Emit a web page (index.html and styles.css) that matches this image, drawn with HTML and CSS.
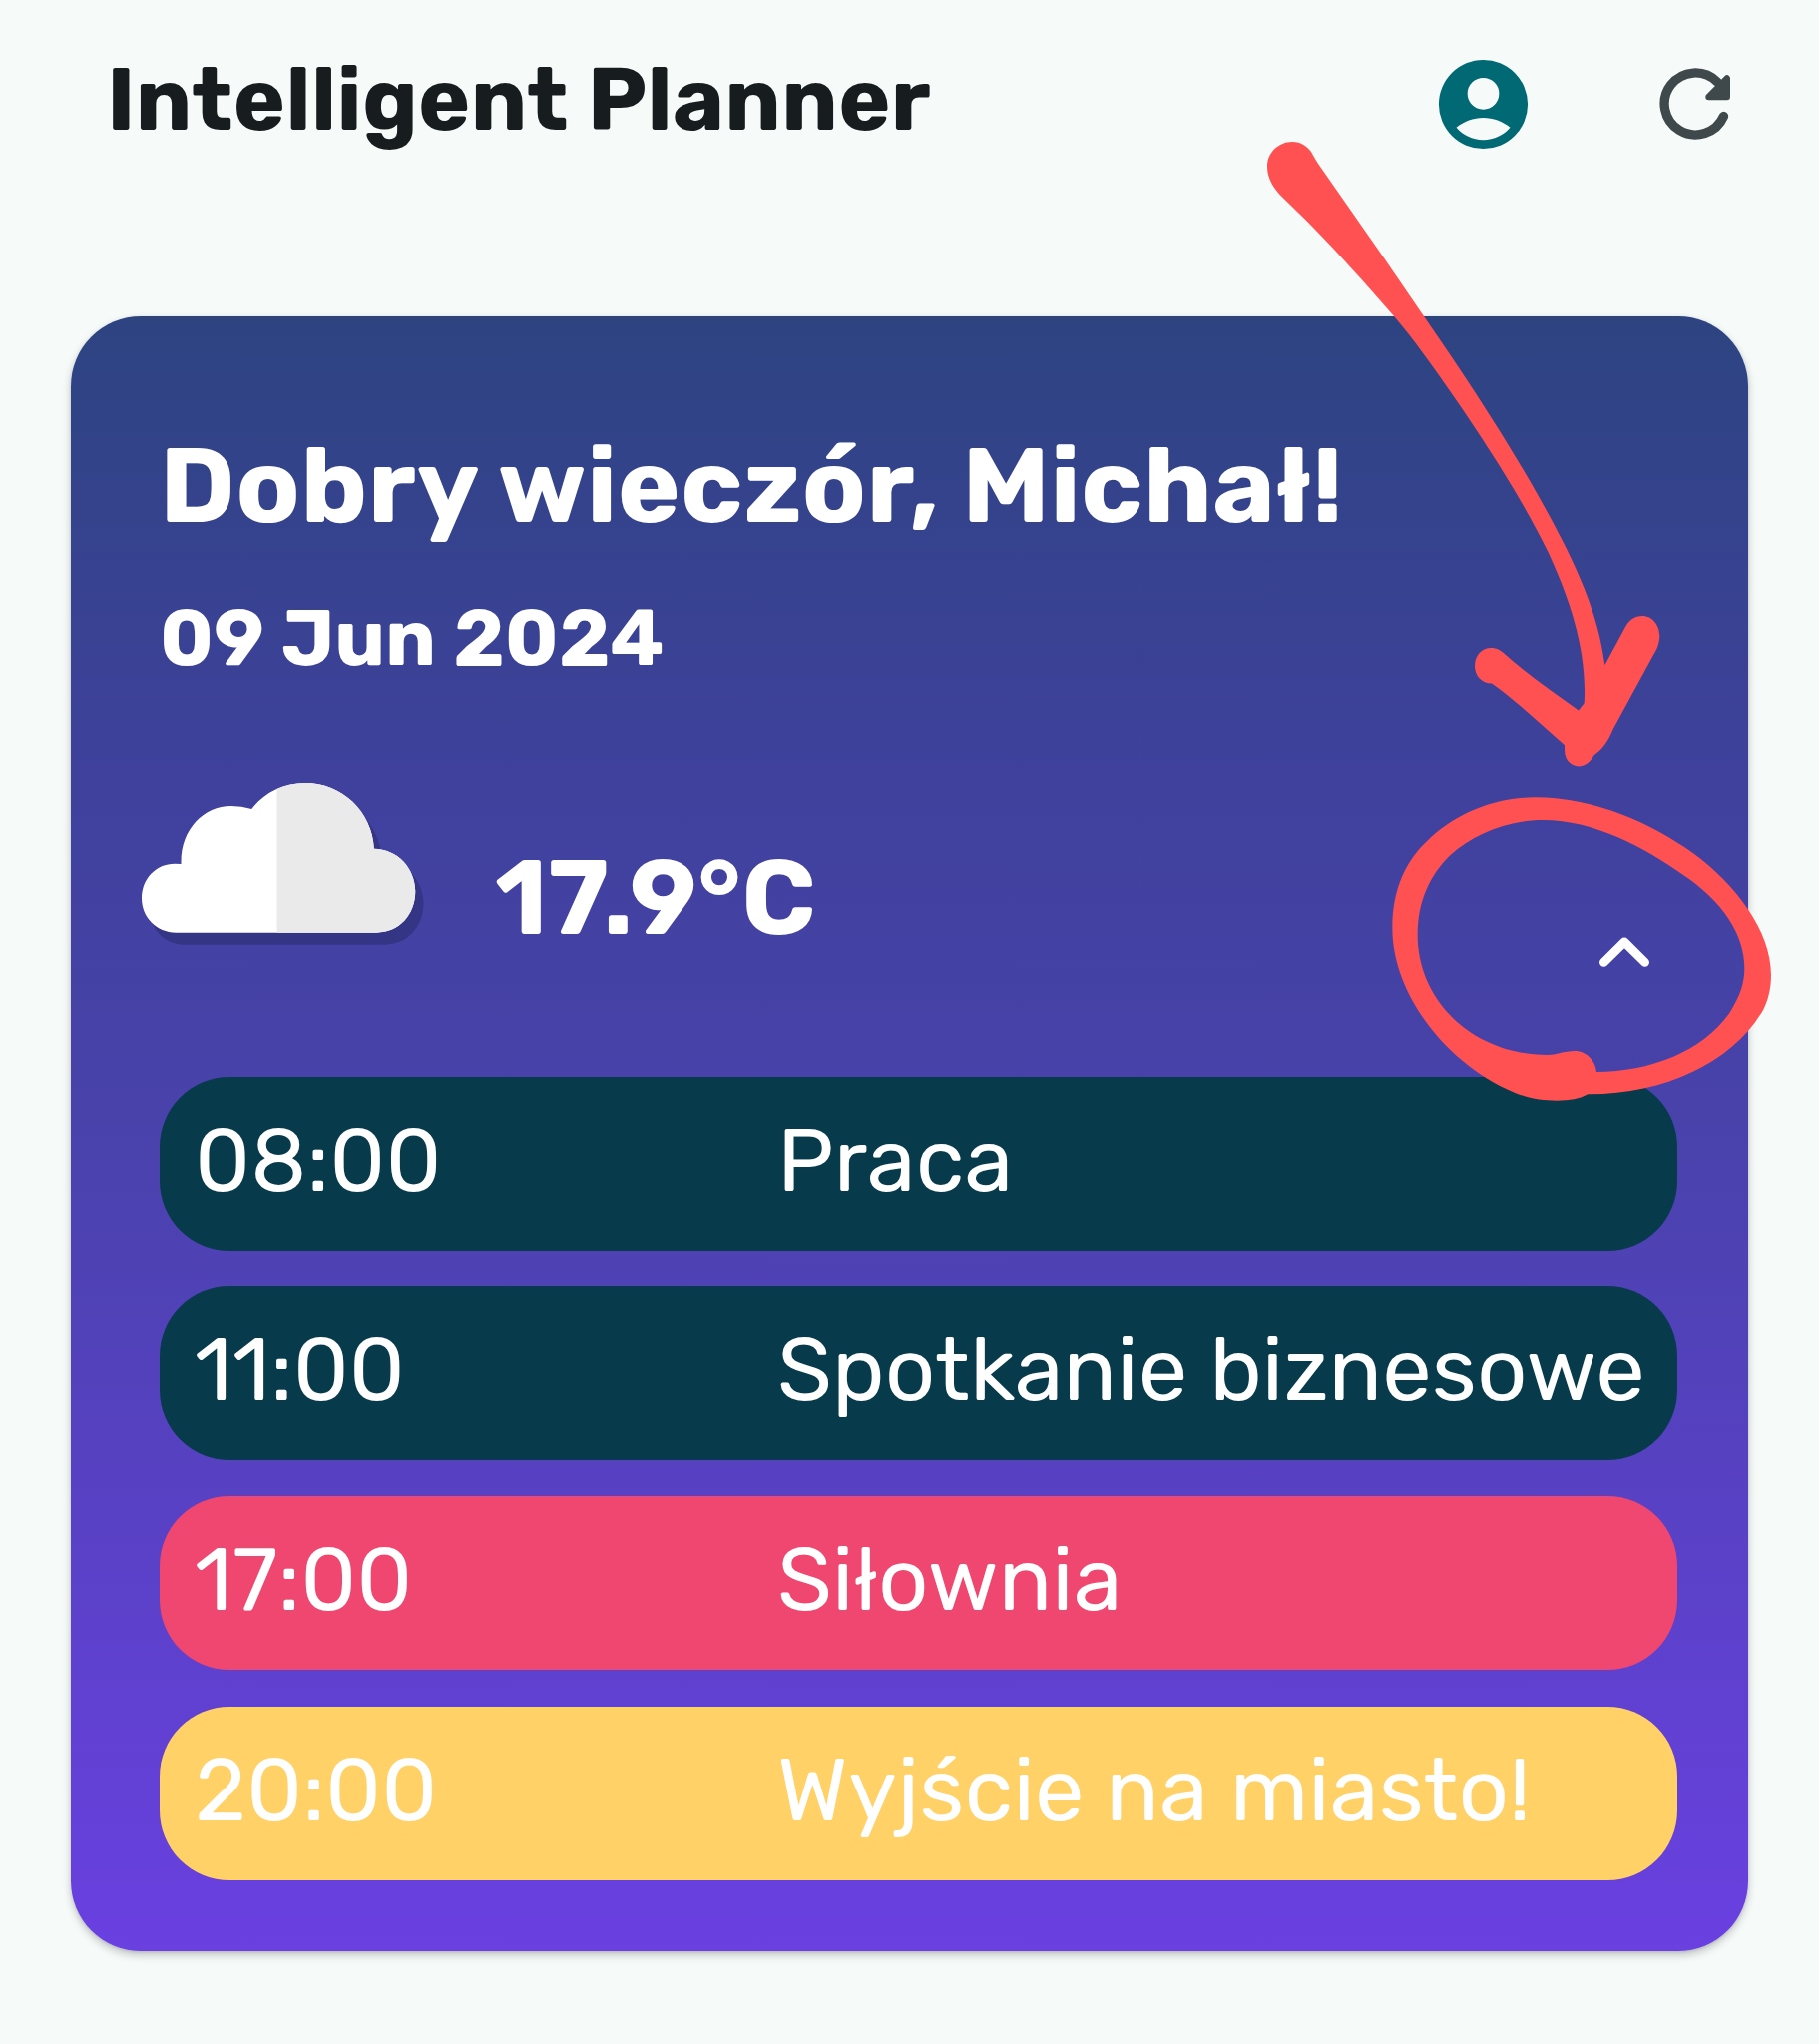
FILE: index.html
```html
<!DOCTYPE html>
<html lang="pl">
<head>
<meta charset="utf-8">
<title>Intelligent Planner</title>
<link rel="stylesheet" href="styles.css">
</head>
<body>
<div class="screen">
  <header class="topbar">
    <h1 class="topbar-title">Intelligent Planner</h1>
    <div class="topbar-actions">
      <svg class="icon-account" viewBox="0 0 24 24" aria-label="Account">
        <path fill="#006973" fill-rule="evenodd" d="M12 2a10 10 0 1 0 0 20a10 10 0 1 0 0-20zM12 6.05a3.55 3.55 0 1 1 0 7.1a3.55 3.55 0 1 1 0-7.1zM5.95 17.2C7.6 15.8 9.8 15 12 15s4.4.8 6.05 2.2C16.6 18.9 14.4 20 12 20s-4.6-1.100-6.050-2.800z"/>
      </svg>
      <svg class="icon-refresh" viewBox="0 0 76 76" aria-label="Refresh">
        <path fill="none" stroke="#3f484a" stroke-width="9.300" stroke-linecap="round" d="M66.500 50.500A31 31 0 1 1 60 16"/>
        <path fill="#3f484a" stroke="#3f484a" stroke-width="6.400" stroke-linejoin="round" d="M69.800 12.500V31H51.500z"/>
      </svg>
    </div>
  </header>

  <main class="card">
    <h2 class="greeting">Dobry wieczór, Michał!</h2>
    <p class="date">09 Jun 2024</p>
    <div class="weather">
      <svg class="cloud" viewBox="0 0 640 495" preserveAspectRatio="none">
        <defs>
          <path id="cloud-shape" d="M75 449C32 449 0 403 0 346C0 286 32 242 72 242L86 243C84 140 135 69 195 69Q218 69 240 78C267 30 307 0 357 0C437 0 503 85 507 197C557 197 597 255 597 325C597 395 562 449 512 449z"/>
          <clipPath id="cloud-right"><rect x="295" y="0" width="345" height="495"/></clipPath>
        </defs>
        <use href="#cloud-shape" fill="#343585" transform="translate(18 36)"/>
        <use href="#cloud-shape" fill="#fff"/>
        <use href="#cloud-shape" fill="#eaeaea" clip-path="url(#cloud-right)"/>
      </svg>
      <span class="temperature">17.9°C</span>
      <svg class="chevron" viewBox="0 0 50 30">
        <path fill="none" stroke="#fff" stroke-width="8.800" stroke-linecap="round" stroke-linejoin="round" d="M4.400 25.300L25 5L45.600 25.300"/>
      </svg>
    </div>
    <ul class="schedule">
      <li class="event event-done"><span class="time">08:00</span><span class="name">Praca</span></li>
      <li class="event event-done"><span class="time">11:00</span><span class="name">Spotkanie biznesowe</span></li>
      <li class="event event-now"><span class="time">17:00</span><span class="name">Siłownia</span></li>
      <li class="event event-next"><span class="time">20:00</span><span class="name">Wyjście na miasto!</span></li>
    </ul>
  </main>

  <svg class="annotation" viewBox="0 0 1823 2048" fill="#ff5151">
    <g transform="translate(1240 120) scale(.33333 .42092)">
      <path d="M90 110C90 78 125 52 165 52C192 52 212 64 222 76C232 90 240 102 250 112L330 203L440 328L560 467C690 615 810 762 905 895C1015 1050 1085 1170 1105 1298L1165 1210C1178 1190 1195 1181 1218 1181C1248 1181 1270 1203 1270 1230C1268 1250 1262 1260 1250 1275L1130 1450C1115 1480 1095 1500 1072 1512C1062 1528 1045 1538 1027 1538C1003 1538 984 1522 984 1500L984 1488L880 1415C845 1390 808 1365 765 1341C735 1341 714 1323 714 1300C714 1275 735 1257 763 1257C780 1257 790 1262 802 1270C870 1318 950 1362 1026 1405L1043 1388C1052 1270 1005 1150 935 1030C862 912 765 790 650 658C590 590 530 522 470 467C430 430 385 390 340 351C300 315 250 275 210 242L130 180C108 160 90 140 90 110z"/>
    </g>
    <g transform="translate(1370 770) scale(.33333)">
      <path fill-rule="evenodd" d="M505 88C690 88 860 170 980 255C1110 350 1215 490 1215 620C1215 665 1205 700 1190 728C1100 880 900 980 664 979C640 993 610 998 570 998C530 998 490 993 445 975C240 890 76 680 76 480C76 360 120 275 180 220C260 140 380 88 505 88zM530 156C430 156 325 195 250 262C190 320 152 400 152 500C152 700 320 861 543 861C570 861 590 849 625 849C660 849 688 880 690 912C850 912 1010 850 1090 735C1125 680 1135 640 1135 600C1135 500 1070 400 950 320C830 236 680 156 530 156z"/>
    </g>
  </svg>
</div>
</body>
</html>
```
FILE: styles.css
```css
* {
  box-sizing: border-box;
}

body {
  margin: 0;
  background: #f6fbfa;
  font-family: Rubik, Roboto, "Liberation Sans", sans-serif;
}

.screen {
  position: relative;
  width: 1823px;
  height: 2048px;
  overflow: hidden;
}

.topbar {
  display: flex;
  align-items: center;
  justify-content: space-between;
  height: 208px;
  padding: 0 86px 0 107px;
}

.topbar-title {
  margin: 0;
  padding-bottom: 9px;
  color: #171c1f;
  font-size: 88px;
  font-weight: 700;
  line-height: 120px;
  letter-spacing: .35px;
  white-space: nowrap;
}

.topbar-actions {
  display: flex;
  align-items: center;
  gap: 121px;
}

.icon-account {
  width: 107px;
  height: 107px;
}

.icon-refresh {
  width: 76px;
  height: 76px;
}

.card {
  width: 1681px;
  height: 1638px;
  margin: 109px 0 0 71px;
  padding: 111px 71px 0 89px;
  border-radius: 70px;
  background: linear-gradient(#2d4481, #3f419c 28%, #4842aa 48%, #6a40e1);
  box-shadow: 0 4px 9px rgba(0, 0, 0, .22), 0 1px 3px rgba(0, 0, 0, .1);
  color: #fff;
}

.greeting {
  margin: 0;
  font-size: 106px;
  font-weight: 700;
  line-height: 119px;
  letter-spacing: .38px;
  white-space: nowrap;
}

.date {
  margin: 47px 0 0;
  font-size: 79.5px;
  font-weight: 700;
  line-height: 90px;
}

.weather {
  display: flex;
  align-items: flex-start;
  height: 395px;
  padding-top: 101px;
}

.cloud {
  width: 294px;
  height: 165px;
  margin-left: -18px;
}

.temperature {
  margin: 55px 0 0 60px;
  font-size: 106px;
  font-weight: 700;
  line-height: 120px;
  letter-spacing: .5px;
}

.chevron {
  width: 50px;
  height: 30px;
  margin: 154px 28px 0 auto;
}

.schedule {
  display: flex;
  flex-direction: column;
  gap: 36.2px;
  margin: 0;
  padding: 0;
  list-style: none;
}

.event {
  display: flex;
  align-items: center;
  height: 174px;
  padding: 0 0 6px 35px;
  border-radius: 70px;
  font-size: 88.3px;
  line-height: 120px;
  letter-spacing: .15px;
  white-space: nowrap;
}

.event-done {
  background: #073b4c;
}

.event-now {
  background: #ef476f;
}

.event-next {
  background: #ffd166;
}

.time {
  width: 584px;
}

.annotation {
  position: absolute;
  inset: 0;
  width: 1823px;
  height: 2048px;
  pointer-events: none;
}
```
